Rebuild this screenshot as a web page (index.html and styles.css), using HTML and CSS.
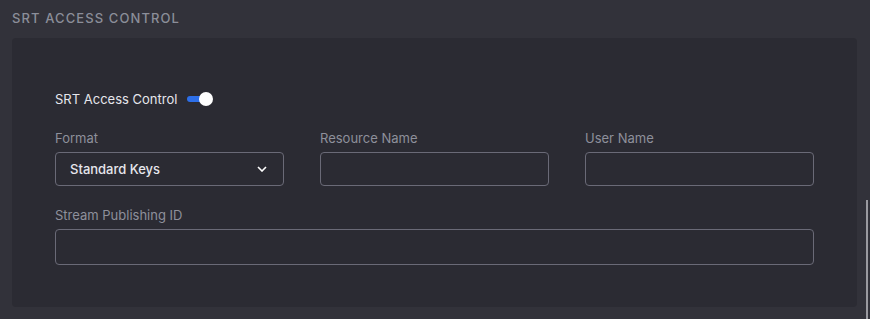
FILE: index.html
```html
<!DOCTYPE html>
<html lang="en">
<head>
    <meta charset="UTF-8">
    <title>SRT Access Control</title>
    <link rel="stylesheet" href="styles.css">
</head>
<body>
    <div class="page">
        <h3 class="section-title">SRT Access Control</h3>
        <div class="panel">
            <div class="toggle-row">
                <span>SRT Access Control</span>
                <span class="switch"><span class="knob"></span></span>
            </div>

            <div class="grid">
                <div class="field">
                    <label>Format</label>
                    <div class="select">
                        <span>Standard Keys</span>
                        <svg width="10" height="6" viewBox="0 0 10 6"><path d="M1 1 L5 5 L9 1" fill="none" stroke="#ffffff" stroke-width="1.6"/></svg>
                    </div>
                </div>
                <div class="field">
                    <label>Resource Name</label>
                    <input type="text">
                </div>
                <div class="field">
                    <label>User Name</label>
                    <input type="text">
                </div>
                <div class="field wide">
                    <label>Stream Publishing ID</label>
                    <input type="text" class="tall">
                </div>
            </div>
        </div>
        <div class="scrollbar"></div>
    </div>
</body>
</html>
```

FILE: styles.css
```css
body {
    margin: 0;
    background: #32323a;
    font-family: Inter, "Noto Sans", sans-serif;
    font-size: 13px;
}

.page {
    position: relative;
    height: 319px;
    padding: 0 13px 0 12px;
    overflow: hidden;
}

.section-title {
    margin: 0;
    padding: 10px 0 12px;
    height: 16px;
    line-height: 16px;
    font-size: 13px;
    font-weight: 500;
    text-transform: uppercase;
    letter-spacing: 1.1px;
    color: #8b8e99;
}

.panel {
    background: #2b2b33;
    border-radius: 4px;
    padding: 52px 43px 42px;
}

.toggle-row {
    display: flex;
    align-items: center;
    gap: 10px;
    height: 18px;
    color: #e6e6ec;
}

.switch {
    position: relative;
    width: 22px;
    height: 6px;
    border-radius: 3px;
    background: #2d6fe9;
}

.knob {
    position: absolute;
    right: -4px;
    top: -4px;
    width: 14px;
    height: 14px;
    border-radius: 50%;
    background: #ffffff;
}

.grid {
    display: grid;
    grid-template-columns: repeat(3, 229px);
    column-gap: 36px;
    row-gap: 21px;
    margin-top: 22px;
}

.field label {
    display: block;
    height: 16px;
    line-height: 16px;
    color: #8e909b;
    margin-bottom: 6px;
}

.field.wide {
    grid-column: 1 / 4;
}

input, .select {
    box-sizing: border-box;
    width: 100%;
    height: 34px;
    margin: 0;
    border: 1px solid #6a6a77;
    border-radius: 4px;
    background: #2b2b33;
    color: #e6e6ec;
    font: inherit;
    outline: none;
}

input.tall {
    height: 36px;
}

.select {
    display: flex;
    align-items: center;
    justify-content: space-between;
    padding: 0 16px 0 14px;
    font-weight: 500;
}

.scrollbar {
    position: absolute;
    right: 2px;
    top: 200px;
    bottom: 0;
    width: 2px;
    background: #9a9aa0;
}
```
